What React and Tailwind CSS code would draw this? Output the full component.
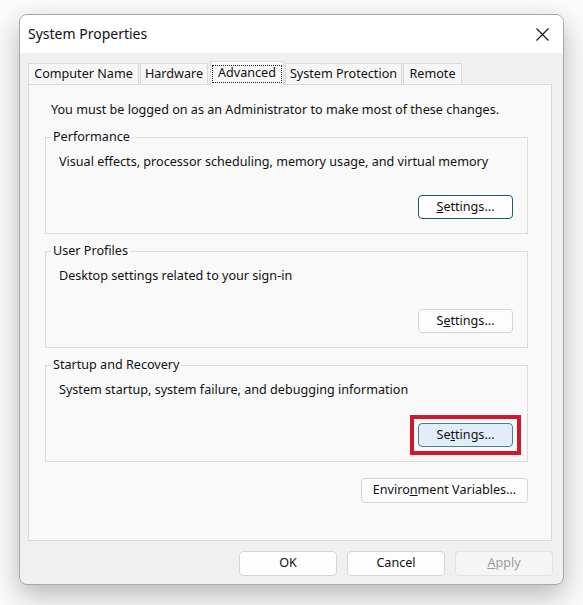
import React from "react";

function Btn({ children, className = "" }) {
  return (
    <div
      className={
        "flex items-center justify-center rounded-[4px] border text-[12.6px] leading-none " +
        className
      }
    >
      {children}
    </div>
  );
}

function Group({ title, desc, button }) {
  return (
    <fieldset className="border border-[#dcdcdc] px-[13px] pb-[14px] pt-[9px]">
      <legend className="-ml-[8px] px-[2px] text-[12.6px] leading-[16px]">{title}</legend>
      <div className="text-[12.6px] leading-[16px]">{desc}</div>
      <div className="mt-[25px] flex justify-end pr-[1px]">{button}</div>
    </fieldset>
  );
}

const tabBase =
  "flex h-[21px] items-center justify-center border border-b-0 border-[#dadada] bg-[#f6f6f6] text-[12.6px]";

export default function App() {
  return (
    <div
      className="h-[605px] w-[583px] bg-[#fbfbfb] pl-[19px] pt-[14px] text-[#111]"
      style={{ fontFamily: '"Noto Sans", "Open Sans", sans-serif' }}
    >
      <div className="flex h-[571px] w-[545px] flex-col overflow-hidden rounded-[8px] border border-[#a8a8a8] bg-[#f0f0f0] shadow-[0_10px_28px_rgba(0,0,0,0.28)]">
        {/* title bar */}
        <div className="flex h-[38px] shrink-0 items-center justify-between bg-white pl-[8px] pr-[14px]">
          <span className="text-[14px] leading-none">System Properties</span>
          <svg width="13" height="13" viewBox="0 0 13 13" className="mt-[1px]">
            <path d="M0.5 0.5 L12.5 12.5 M12.5 0.5 L0.5 12.5" stroke="#1a1a1a" strokeWidth="1.2" />
          </svg>
        </div>

        {/* body */}
        <div className="flex flex-1 flex-col px-[8px] pt-[9px]">
          {/* tabs */}
          <div className="relative z-10 flex h-[22px] items-end gap-[1px]">
            <div className={tabBase + " w-[111px]"}>Computer Name</div>
            <div className={tabBase + " w-[68px]"}>Hardware</div>
            <div className="-mb-[1px] ml-[1px] flex h-[24px] w-[74px] items-center justify-center border border-b-0 border-[#dadada] bg-[#f9f9f9] px-[1px]">
              <span className="flex h-[18px] w-full items-center justify-center border border-dotted border-[#222] text-[12.6px]">Advanced</span>
            </div>
            <div className={tabBase + " w-[117px]"}>System Protection</div>
            <div className={tabBase + " w-[59px]"}>Remote</div>
          </div>

          {/* page */}
          <div className="mr-[3px] flex h-[457px] flex-col border border-[#dadada] bg-[#f9f9f9] pl-[16px] pr-[23px] pt-[17px]">
            <div className="pl-[6px] text-[12.6px] leading-[16px]">
              You must be logged on as an Administrator to make most of these changes.
            </div>
            <div className="mt-[11px] flex flex-col gap-[9px]">
              <Group
                title="Performance"
                desc="Visual effects, processor scheduling, memory usage, and virtual memory"
                button={
                  <Btn className="h-[24px] w-[95px] border-[#1d5a6b] bg-[#fdfdfd]">
                    <span><u>S</u>ettings...</span>
                  </Btn>
                }
              />
              <Group
                title="User Profiles"
                desc="Desktop settings related to your sign-in"
                button={
                  <Btn className="h-[24px] w-[95px] border-[#d5d5d5] bg-[#fdfdfd]">
                    <span>S<u>e</u>ttings...</span>
                  </Btn>
                }
              />
              <Group
                title="Startup and Recovery"
                desc="System startup, system failure, and debugging information"
                button={
                  <div className="outline-4 outline-offset-[4px] outline-[#d0182c]">
                    <Btn className="h-[24px] w-[95px] border-[#4d7b98] bg-[#e1eef9]">
                      <span>Se<u>t</u>tings...</span>
                    </Btn>
                  </div>
                }
              />
            </div>
            <div className="mt-[16px] flex justify-end">
              <Btn className="h-[25px] w-[167px] border-[#d5d5d5] bg-[#fdfdfd]">
                <span>Enviro<u>n</u>ment Variables...</span>
              </Btn>
            </div>
          </div>

          {/* bottom buttons */}
          <div className="flex justify-end gap-[10px] pr-[2px] pt-[10px]">
            <Btn className="h-[25px] w-[98px] border-[#d5d5d5] bg-[#fdfdfd]">OK</Btn>
            <Btn className="h-[25px] w-[98px] border-[#d5d5d5] bg-[#fdfdfd]">Cancel</Btn>
            <Btn className="h-[25px] w-[98px] border-[#e3e3e3] bg-[#f5f5f5] text-[#9d9d9d]">
              <span><u>A</u>pply</span>
            </Btn>
          </div>
        </div>
      </div>
    </div>
  );
}
